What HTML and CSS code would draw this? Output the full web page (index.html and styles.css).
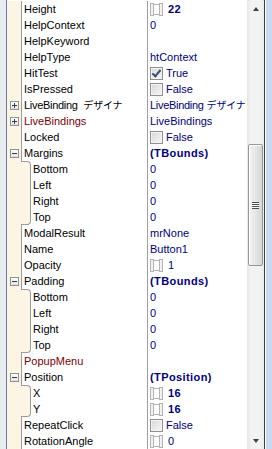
FILE: index.html
```html
<!DOCTYPE html>
<html lang="en">
<head>
    <meta charset="UTF-8">
    <title>Object Inspector</title>
    <link rel="stylesheet" href="styles.css">
</head>
<body>

<div class="inspector">
    <div class="frame-left"></div>

    <div class="grid">
        <div class="row">
            <div class="gutter"></div><div class="edge"></div>
            <div class="name">Height</div>
            <div class="value"><svg class="spin" viewBox="0 0 13 13"><use href="#spin"/></svg><b>22</b></div>
        </div>
        <div class="row">
            <div class="gutter"></div><div class="edge"></div>
            <div class="name">HelpContext</div>
            <div class="value">0</div>
        </div>
        <div class="row">
            <div class="gutter"></div><div class="edge"></div>
            <div class="name">HelpKeyword</div>
            <div class="value"></div>
        </div>
        <div class="row">
            <div class="gutter"></div><div class="edge"></div>
            <div class="name">HelpType</div>
            <div class="value">htContext</div>
        </div>
        <div class="row">
            <div class="gutter"></div><div class="edge"></div>
            <div class="name">HitTest</div>
            <div class="value"><span class="check checked"></span>True</div>
        </div>
        <div class="row">
            <div class="gutter"></div><div class="edge"></div>
            <div class="name">IsPressed</div>
            <div class="value"><span class="check"></span>False</div>
        </div>
        <div class="row">
            <div class="gutter"><span class="toggle plus"></span></div><div class="edge"></div>
            <div class="name narrow">LiveBinding <span class="jp">デザイナ</span></div>
            <div class="value narrow">LiveBinding <span class="jp">デザイナ</span></div>
        </div>
        <div class="row">
            <div class="gutter"><span class="toggle plus"></span></div><div class="edge"></div>
            <div class="name ref">LiveBindings</div>
            <div class="value">LiveBindings</div>
        </div>
        <div class="row">
            <div class="gutter"></div><div class="edge"></div>
            <div class="name">Locked</div>
            <div class="value"><span class="check"></span>False</div>
        </div>

        <div class="row">
            <div class="gutter"><span class="toggle"></span></div><div class="edge"></div>
            <div class="name">Margins</div>
            <div class="value"><b>(TBounds)</b></div>
        </div>
        <div class="row">
            <div class="gutter"></div><div class="indent first"></div>
            <div class="name">Bottom</div>
            <div class="value">0</div>
        </div>
        <div class="row">
            <div class="gutter"></div><div class="indent"></div>
            <div class="name">Left</div>
            <div class="value">0</div>
        </div>
        <div class="row">
            <div class="gutter"></div><div class="indent"></div>
            <div class="name">Right</div>
            <div class="value">0</div>
        </div>
        <div class="row">
            <div class="gutter"></div><div class="indent last"></div>
            <div class="name">Top</div>
            <div class="value">0</div>
        </div>

        <div class="row">
            <div class="gutter"></div><div class="edge"></div>
            <div class="name">ModalResult</div>
            <div class="value">mrNone</div>
        </div>
        <div class="row">
            <div class="gutter"></div><div class="edge"></div>
            <div class="name">Name</div>
            <div class="value">Button1</div>
        </div>
        <div class="row">
            <div class="gutter"></div><div class="edge"></div>
            <div class="name">Opacity</div>
            <div class="value"><svg class="spin" viewBox="0 0 13 13"><use href="#spin"/></svg>1</div>
        </div>

        <div class="row">
            <div class="gutter"><span class="toggle"></span></div><div class="edge"></div>
            <div class="name">Padding</div>
            <div class="value"><b>(TBounds)</b></div>
        </div>
        <div class="row">
            <div class="gutter"></div><div class="indent first"></div>
            <div class="name">Bottom</div>
            <div class="value">0</div>
        </div>
        <div class="row">
            <div class="gutter"></div><div class="indent"></div>
            <div class="name">Left</div>
            <div class="value">0</div>
        </div>
        <div class="row">
            <div class="gutter"></div><div class="indent"></div>
            <div class="name">Right</div>
            <div class="value">0</div>
        </div>
        <div class="row">
            <div class="gutter"></div><div class="indent last"></div>
            <div class="name">Top</div>
            <div class="value">0</div>
        </div>

        <div class="row">
            <div class="gutter"></div><div class="edge"></div>
            <div class="name ref">PopupMenu</div>
            <div class="value"></div>
        </div>

        <div class="row">
            <div class="gutter"><span class="toggle"></span></div><div class="edge"></div>
            <div class="name">Position</div>
            <div class="value"><b>(TPosition)</b></div>
        </div>
        <div class="row">
            <div class="gutter"></div><div class="indent first"></div>
            <div class="name">X</div>
            <div class="value"><svg class="spin" viewBox="0 0 13 13"><use href="#spin"/></svg><b>16</b></div>
        </div>
        <div class="row">
            <div class="gutter"></div><div class="indent last"></div>
            <div class="name">Y</div>
            <div class="value"><svg class="spin" viewBox="0 0 13 13"><use href="#spin"/></svg><b>16</b></div>
        </div>

        <div class="row">
            <div class="gutter"></div><div class="edge"></div>
            <div class="name">RepeatClick</div>
            <div class="value"><span class="check"></span>False</div>
        </div>
        <div class="row">
            <div class="gutter"></div><div class="edge"></div>
            <div class="name">RotationAngle</div>
            <div class="value"><svg class="spin" viewBox="0 0 13 13"><use href="#spin"/></svg>0</div>
        </div>
    </div>

    <div class="scrollbar">
        <div class="arrow up"></div>
        <div class="track">
            <div class="thumb"><span class="grip"></span></div>
        </div>
        <div class="arrow down"></div>
    </div>

    <div class="frame-right"></div>
</div>

<!-- shared spin-edit glyph -->
<svg width="0" height="0" class="defs">
    <symbol id="spin" viewBox="0 0 13 13">
        <rect x="0.5" y="0.5" width="3" height="12" fill="#f2f2f2" stroke="#b4b4b4"/>
        <rect x="9.5" y="0.5" width="3" height="12" fill="#f2f2f2" stroke="#b4b4b4"/>
        <path d="M3.5 1.5H9.5M3.5 11.5H9.5" stroke="#b4b4b4"/>
    </symbol>
</svg>

</body>
</html>
```

FILE: styles.css
```css
body {
    margin: 0;
    padding: 0;
    background: #fff;
    font-family: 'Liberation Sans', Arial, sans-serif;
    font-size: 11px;
}

.defs {
    position: absolute;
}

.inspector {
    display: flex;
    width: 272px;
    height: 449px;
    overflow: hidden;
}

.frame-left {
    width: 6px;
    background: #e9ecf1;
    border-right: 1px solid #6f7e94;
}

.frame-right {
    width: 6px;
    background: #c8daf1;
    border-left: 1px solid #3c3c3c;
    box-shadow: inset 1px 0 0 #fff;
    padding-left: 1px;
}

.grid {
    width: 240px;
    padding-top: 1px;
    display: flex;
    flex-direction: column;
}

.row {
    display: flex;
    height: 16px;
    line-height: 16px;
}

.gutter {
    width: 14px;
    background: #fcf4e4;
    display: flex;
    align-items: center;
    justify-content: center;
}

.edge {
    width: 1px;
    background: #9c9c9c;
}

.indent {
    width: 10px;
    box-sizing: border-box;
    background: #fcf4e4;
    border-right: 1px solid #9c9c9c;
}

.indent.first {
    border-top: 1px solid #9c9c9c;
    border-top-right-radius: 4px;
}

.indent.last {
    border-bottom: 1px solid #9c9c9c;
    border-bottom-right-radius: 4px;
}

.name {
    flex: 1;
    padding-left: 2px;
    color: #000;
    border-right: 1px solid #a0a0a0;
    white-space: nowrap;
    overflow: hidden;
}

.name.ref {
    color: #800000;
}

.value {
    width: 97px;
    padding-left: 2px;
    color: #000080;
    display: flex;
    align-items: center;
    white-space: nowrap;
    overflow: hidden;
}

.narrow {
    letter-spacing: -0.3px;
}

.value b {
    letter-spacing: 0.4px;
}

.jp {
    font-family: 'Noto Sans CJK JP', sans-serif;
    font-size: 10px;
    letter-spacing: -0.2px;
    margin-left: 3px;
}

.spin {
    width: 13px;
    height: 13px;
    margin-right: 5px;
    flex-shrink: 0;
}

.toggle {
    width: 9px;
    height: 9px;
    box-sizing: border-box;
    border: 1px solid #919191;
    background: linear-gradient(#fff, #e2e2e2);
    position: relative;
}

.toggle::before {
    content: '';
    position: absolute;
    left: 1px;
    top: 3px;
    width: 5px;
    height: 1px;
    background: #2e3a58;
}

.toggle.plus::after {
    content: '';
    position: absolute;
    left: 3px;
    top: 1px;
    width: 1px;
    height: 5px;
    background: #2e3a58;
}

.check {
    width: 13px;
    height: 13px;
    box-sizing: border-box;
    border: 1px solid #8e8f8f;
    background: linear-gradient(135deg, #d6d8dc, #f6f6f6);
    box-shadow: inset 0 0 0 1px #f4f4f4;
    margin-right: 3px;
    flex-shrink: 0;
    position: relative;
}

.check.checked::after {
    content: '';
    position: absolute;
    left: 3px;
    top: 0px;
    width: 3px;
    height: 7px;
    border-right: 2px solid #3b4c7a;
    border-bottom: 2px solid #3b4c7a;
    transform: rotate(40deg);
}

.scrollbar {
    width: 17px;
    display: flex;
    flex-direction: column;
    background: linear-gradient(to right, #e6e6e6, #f3f3f3 25%, #f3f3f3 75%, #ececec);
}

.arrow {
    height: 17px;
    display: flex;
    align-items: center;
    justify-content: center;
}

.arrow::after {
    content: '';
    border-left: 3.5px solid transparent;
    border-right: 3.5px solid transparent;
}

.arrow.up::after {
    border-bottom: 4px solid #404040;
}

.arrow.down::after {
    border-top: 4px solid #404040;
}

.track {
    flex: 1;
    padding-top: 127px;
}

.thumb {
    margin: 0 1px 0 1px;
    height: 122px;
    box-sizing: border-box;
    border: 1px solid #979797;
    border-radius: 2px;
    background: linear-gradient(to right, #f4f4f4, #e6e6e6 50%, #d6d6d6);
    box-shadow: inset 1px 1px 0 #fff;
    display: flex;
    align-items: center;
    justify-content: center;
}

.grip {
    width: 7px;
    height: 7px;
    background: repeating-linear-gradient(#505050 0 1px, #fafafa 1px 2px);
}
```
